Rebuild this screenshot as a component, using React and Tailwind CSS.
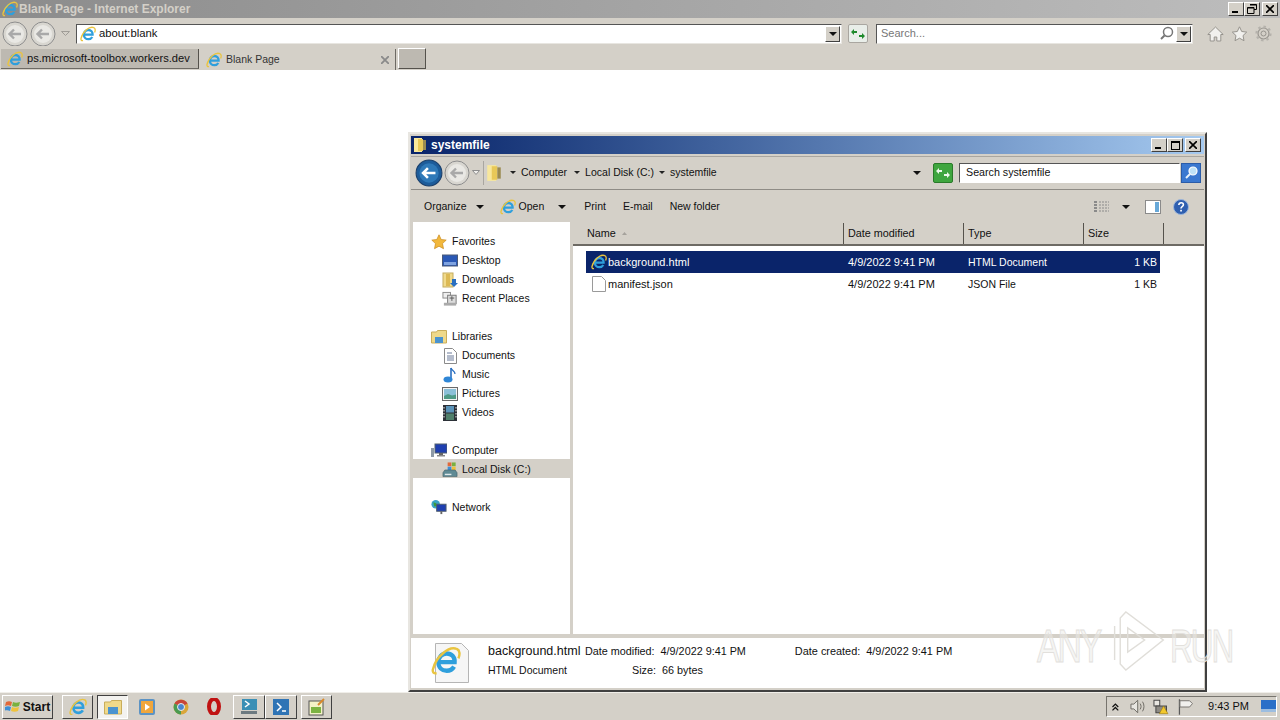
import React from 'react';

// small drawn icons
const IeIcon = ({ size = 16 }) => (
  <svg width={size} height={size} viewBox="0 0 16 16" className="shrink-0">
    <path d="M4 8.600h8.600c.2-2.800-1.700-4.600-4.200-4.600-2.600 0-4.500 2.100-4.500 4.700 0 2.700 1.900 4.500 4.500 4.500 1.800 0 3.100-.8 3.900-2.200" fill="none" stroke="#2f9fdc" strokeWidth="2.300" />
    <path d="M13.800 1.600C9.500-.2 2.600 5.800 1 12.500c-.3 1.500.5 2.300 2 2M13.800 1.600c1.700.7 1.700 3 .8 5" fill="none" stroke="#e9c440" strokeWidth="1.300" />
  </svg>
);

const FolderTall = ({ w = 14, h = 16 }) => (
  <svg width={w} height={h} viewBox="0 0 14 16" className="shrink-0">
    <rect x="1" y="1" width="8" height="14" fill="#f8e79c" />
    <rect x="5" y="2" width="5" height="12" fill="#e8c858" />
    <rect x="10" y="3" width="3" height="10" fill="#9a8a50" />
  </svg>
);

const NavButton = ({ active, size = 26 }) => (
  <svg width={size} height={size} viewBox="0 0 26 26" className="shrink-0">
    <circle cx="13" cy="13" r="12" fill={active ? '#1d5c9a' : '#d8d6d0'} stroke={active ? '#1b3f6a' : '#8d8d8d'} />
    <circle cx="13" cy="13" r="9" fill={active ? '#2f79b8' : '#e9e8e4'} />
    <path d={'M19 13H8m4-4.500-4.500 4.500 4.500 4.500'} fill="none" stroke={active ? '#fff' : '#a9a9a9'} strokeWidth="2.400" />
  </svg>
);

const Caret = ({ className = '' }) => (
  <span className={`inline-block w-0 h-0 border-x-[4px] border-x-transparent border-t-[4px] border-t-[#111] ${className}`} />
);

const SmallCaret = () => (
  <span className="inline-block w-0 h-0 border-x-[3px] border-x-transparent border-t-[3px] border-t-[#222]" />
);

const RefreshArrows = ({ color = '#1f8a2c' }) => (
  <svg width="14" height="10" viewBox="0 0 14 10">
    <path d="M6 2H3V0L0 3l3 3V4h3zM8 8h3v2l3-3-3-3v2H8z" fill={color} />
  </svg>
);

const WinClose = () => (
  <svg width="8" height="8" viewBox="0 0 8 8"><path d="M0 0l8 8M8 0l-8 8" stroke="#000" strokeWidth="1.600" /></svg>
);

const WinButton = ({ kind, className = '' }) => (
  <div className={`w-[16px] h-[14px] bg-[#d4d0c8] border border-t-white border-l-white border-r-[#404040] border-b-[#404040] flex items-center justify-center ${className}`}>
    {kind === 'min' && <div className="w-[6px] h-[2px] bg-black mt-[6px] mr-[2px]" />}
    {kind === 'max' && <div className="w-[9px] h-[9px] border border-black border-t-2" />}
    {kind === 'restore' && (
      <svg width="10" height="10" viewBox="0 0 10 10"><path d="M3 .5h6.500v5H7M.5 3.500h6.500v6H.5z" fill="none" stroke="#000" /><path d="M3 1h6.500M.5 4h6.500" stroke="#000" /></svg>
    )}
    {kind === 'close' && <WinClose />}
  </div>
);

const Star = ({ size = 16 }) => (
  <svg width={size} height={size} viewBox="0 0 16 16" className="shrink-0">
    <path d="M8 .8l2.200 4.700 5 .6-3.700 3.500 1 5.100L8 12.200l-4.500 2.500 1-5.100L.8 6.100l5-.6z" fill="#f2b83c" stroke="#c98a1e" strokeWidth=".7" />
  </svg>
);

const NavIcon = ({ kind }) => {
  if (kind === 'desktop') return (
    <svg width="16" height="14" viewBox="0 0 16 14"><rect x=".5" y="1" width="15" height="11" fill="#2a58b5" stroke="#4a5a78" /><rect x="2" y="8" width="12" height="3" fill="#7fa3e0" /></svg>
  );
  if (kind === 'downloads') return (
    <svg width="16" height="16" viewBox="0 0 16 16"><rect x="1" y="1" width="10" height="14" fill="#f0da8c" stroke="#c5ac5e" /><rect x="4" y="2" width="4" height="12" fill="#dcb955" /><path d="M10 7h4v4h2l-4 4-4-4h2z" fill="#2a6fc0" /></svg>
  );
  if (kind === 'recent') return (
    <svg width="17" height="16" viewBox="0 0 17 16"><rect x="1" y="1" width="8" height="6" fill="#eee" stroke="#888" /><rect x="6" y="4" width="9" height="9" fill="#dcdcdc" stroke="#777" /><path d="M8 7h5M10.500 5v5" stroke="#555" /><rect x="2" y="12" width="13" height="3" fill="#aaa" /></svg>
  );
  if (kind === 'libraries') return (
    <svg width="16" height="15" viewBox="0 0 16 15"><path d="M.5 3h5l1-1.500h9V14H.5z" fill="#efd98a" stroke="#c9ad5a" /><rect x="4" y="8" width="8" height="6" fill="#4a93cf" /></svg>
  );
  if (kind === 'documents') return (
    <svg width="13" height="16" viewBox="0 0 13 16"><path d="M.5.500h8l4 4v11H.5z" fill="#fff" stroke="#8a8a8a" /><path d="M3 5h5M3 8h7M3 10h7M3 12h7" stroke="#6a7a9a" /></svg>
  );
  if (kind === 'music') return (
    <svg width="14" height="16" viewBox="0 0 14 16"><path d="M8 1v11" stroke="#2a6fc0" strokeWidth="1.600" /><path d="M8 1c1 3 4 3 4 6" fill="none" stroke="#2a6fc0" strokeWidth="1.300" /><ellipse cx="5" cy="12.500" rx="4.500" ry="3" fill="#2f86d6" /></svg>
  );
  if (kind === 'pictures') return (
    <svg width="16" height="14" viewBox="0 0 16 14"><rect x=".5" y=".5" width="15" height="13" fill="#f4f4f4" stroke="#6a6a6a" /><rect x="2" y="2" width="12" height="10" fill="#8cc0d8" /><path d="M2 9l4-2 4 1.500 4-1V12H2z" fill="#4f9a86" /></svg>
  );
  if (kind === 'videos') return (
    <svg width="14" height="16" viewBox="0 0 14 16"><rect width="14" height="16" fill="#2c3138" /><rect x="3" y="1" width="8" height="6.500" fill="#5a93b8" /><rect x="3" y="8.500" width="8" height="6.500" fill="#4f7f6a" /><path d="M1 2v12M13 2v12" stroke="#ccc" strokeWidth="1.200" strokeDasharray="1.500 1.500" /></svg>
  );
  if (kind === 'computer') return (
    <svg width="16" height="16" viewBox="0 0 16 16"><rect x="4" y="1" width="12" height="9" fill="#1f3fb0" stroke="#52606e" /><rect x="8" y="10" width="4" height="2" fill="#666" /><rect x="6" y="12" width="8" height="1.500" fill="#888" /><rect y="5" width="3" height="9" fill="#8e9aa6" /></svg>
  );
  if (kind === 'disk') return (
    <svg width="17" height="17" viewBox="0 0 17 17"><rect x="6" y="1" width="4" height="4" fill="#e2693a" /><rect x="10.500" y="1" width="4" height="4" fill="#79b13f" /><rect x="6" y="5.500" width="4" height="4" fill="#3f8fd6" /><rect x="10.500" y="5.500" width="4" height="4" fill="#efc23c" /><path d="M3 9h11l2 3v4H1v-4z" fill="#5f8a94" stroke="#3f5a62" strokeWidth=".6" /><rect x="3" y="13" width="7" height="1.500" fill="#dfe8ea" /></svg>
  );
  if (kind === 'network') return (
    <svg width="17" height="17" viewBox="0 0 17 17"><circle cx="5" cy="5" r="4.500" fill="#38a3c8" /><path d="M2.500 3l3 1 1 3-3 .5z" fill="#3c9a3c" /><rect x="6" y="5" width="10" height="7.500" fill="#1f3fb0" stroke="#4f5d6c" /><rect x="10" y="12.500" width="2" height="3" fill="#666" /></svg>
  );
  return null;
};

const NavHead = ({ icon, label }) => (
  <div className="h-[19px] pt-[2px] flex items-center pl-[18px] gap-[5px]">
    <div className="w-[16px] flex justify-center">{icon}</div>
    <span>{label}</span>
  </div>
);

const NavItem = ({ kind, label, selected }) => (
  <div className={`h-[19px] pt-[2px] flex items-center pl-[29px] gap-[4px] ${selected ? 'bg-[#d4d0c8]' : ''}`}>
    <div className="w-[16px] flex justify-center"><NavIcon kind={kind} /></div>
    <span>{label}</span>
  </div>
);

const FileRow = ({ icon, name, type, selected }) => (
  <div className={`h-[22px] flex items-center ${selected ? 'bg-[#0a246a] text-white' : ''}`}>
    <div className="w-[22px] flex justify-center pl-[3px]">{icon}</div>
    <span className="w-[240px]">{name}</span>
    <span className="w-[120px]">4/9/2022 9:41 PM</span>
    <span className="w-[120px] pt-px text-[10.500px]">{type}</span>
    <span className="w-[69px] pt-px text-right text-[10.500px]">1 KB</span>
  </div>
);

const Explorer = () => (
  <div className="absolute left-[408px] top-[132px] w-[799px] h-[560px] bg-[#d4d0c8] border-2 border-t-[#e8e6e1] border-l-[#e8e6e1] border-r-[#404040] border-b-[#404040] pt-[2px] px-[1px] flex flex-col text-[11px] text-[#111]">
    {/* title */}
    <div className="h-[18px] shrink-0 bg-gradient-to-r from-[#0a246a] to-[#a6caf0] flex items-center px-[2px]">
      <FolderTall />
      <span className="ml-[4px] text-white font-bold text-[12px]">systemfile</span>
      <div className="ml-auto flex mr-[1px]">
        <WinButton kind="min" />
        <WinButton kind="max" />
        <WinButton kind="close" className="ml-[2px]" />
      </div>
    </div>
    {/* address row */}
    <div className="h-[34px] shrink-0 mt-[2px] pb-[1px] border-y border-y-[#8f8c86] border-t-[#a9a6a0] flex items-center pl-[4px] pr-[3px]">
      <NavButton active size={28} />
      <div className="ml-[1px]"><NavButton /></div>
      <div className="ml-[2px] mr-[3px]"><svg width="8" height="5" viewBox="0 0 8 5"><path d="M.5.500h7L4 4.500z" fill="#f0efec" stroke="#8d8d8d" /></svg></div>
      <div className="w-px h-[24px] bg-[#a9a6a0]" />
      <div className="ml-[2px]"><FolderTall w={16} h={18} /></div>
      <div className="ml-[8px] flex items-center gap-[5px] text-[10.500px]">
        <SmallCaret /><span>Computer</span>
      </div>
      <div className="ml-[7px] flex items-center gap-[5px] text-[10.500px]">
        <SmallCaret /><span>Local Disk (C:)</span>
      </div>
      <div className="ml-[5px] flex items-center gap-[5px] text-[10.500px]">
        <SmallCaret /><span>systemfile</span>
      </div>
      <Caret className="ml-auto" />
      <div className="ml-[12px] w-[20px] h-[20px] bg-[#3fa63f] border border-[#2a7a2a] rounded-[2px] flex items-center justify-center">
        <RefreshArrows color="#ecf8ea" />
      </div>
      <div className="ml-[6px] w-[221px] h-[20px] bg-white border border-t-[#555] border-l-[#555] border-r-white border-b-white flex items-center pl-[6px] text-[10.700px]">Search systemfile</div>
      <div className="ml-px w-[20px] h-[20px] bg-[#3a78d0] border border-[#2b5ca8] flex items-center justify-center">
        <svg width="15" height="15" viewBox="0 0 15 15"><circle cx="9" cy="6" r="4" fill="#bfe2f7" stroke="#fff" strokeWidth="1.200" /><path d="M6 9l-4 4" stroke="#e8f2fb" strokeWidth="2" /></svg>
      </div>
    </div>
    {/* command bar */}
    <div className="h-[32px] shrink-0 pt-px flex items-center pl-[13px] text-[10.500px]">
      <span>Organize</span>
      <Caret className="ml-[9px]" />
      <div className="ml-[16px]"><IeIcon /></div>
      <span className="ml-[3px]">Open</span>
      <Caret className="ml-[14px]" />
      <span className="ml-[18px]">Print</span>
      <span className="ml-[17px]">E-mail</span>
      <span className="ml-[17px]">New folder</span>
      <div className="ml-auto flex items-center mr-[15px]">
        <svg width="16" height="13" viewBox="0 0 16 13"><path d="M0 2h3M0 5h3M0 8h3M0 11h3" stroke="#8a8a8a" strokeWidth="2" /><path d="M5 2h10M5 5h10M5 8h10M5 11h10" stroke="#8a8a8a" strokeDasharray="2 1" /></svg>
        <Caret className="ml-[12px]" />
        <svg width="16" height="14" viewBox="0 0 16 14" className="ml-[15px]"><rect x=".5" y=".5" width="15" height="13" fill="#fff" stroke="#8a8a8a" /><rect x="10" y="2" width="4" height="10" fill="#67a8d8" /></svg>
        <svg width="16" height="16" viewBox="0 0 16 16" className="ml-[12px]"><circle cx="8" cy="8" r="7.500" fill="#2f5fb0" stroke="#9db6da" /><path d="M5.800 6c.2-3 4.600-3 4.600-.2 0 2-2.400 1.800-2.400 3.700" fill="none" stroke="#fff" strokeWidth="1.600" /><rect x="7.200" y="10.800" width="1.700" height="1.700" fill="#fff" /></svg>
      </div>
    </div>
    {/* body */}
    <div className="flex flex-1 min-h-0">
      <div className="w-[2px] shrink-0" />
      <div className="w-[157px] shrink-0 bg-white pt-[9px] text-[10.500px]">
        <NavHead icon={<Star />} label="Favorites" />
        <NavItem kind="desktop" label="Desktop" />
        <NavItem kind="downloads" label="Downloads" />
        <NavItem kind="recent" label="Recent Places" />
        <div className="mt-[19px]">
          <NavHead icon={<NavIcon kind="libraries" />} label="Libraries" />
          <NavItem kind="documents" label="Documents" />
          <NavItem kind="music" label="Music" />
          <NavItem kind="pictures" label="Pictures" />
          <NavItem kind="videos" label="Videos" />
        </div>
        <div className="mt-[19px]">
          <NavHead icon={<NavIcon kind="computer" />} label="Computer" />
          <NavItem kind="disk" label="Local Disk (C:)" selected />
        </div>
        <div className="mt-[19px]">
          <NavHead icon={<NavIcon kind="network" />} label="Network" />
        </div>
      </div>
      <div className="w-[3px] shrink-0" />
      <div className="flex-1 bg-white flex flex-col min-w-0">
        <div className="h-[24px] shrink-0 bg-[#d4d0c8] border-b-2 border-b-[#6d6a64] pt-px flex text-[10.800px]">
          <div className="w-[271px] border-r border-r-[#55524c] flex items-center pl-[14px] gap-[6px]">
            <span>Name</span>
            <svg width="5" height="3" viewBox="0 0 5 3"><path d="M2.500 0L5 3H0z" fill="#a5a29c" /></svg>
          </div>
          <div className="w-[120px] border-r border-r-[#55524c] flex items-center pl-[4px]">Date modified</div>
          <div className="w-[120px] border-r border-r-[#55524c] flex items-center pl-[4px]">Type</div>
          <div className="w-[80px] border-r border-r-[#55524c] flex items-center pl-[4px]">Size</div>
        </div>
        <div className="ml-[13px] w-[574px] mt-[5px]">
          <FileRow icon={<IeIcon />} name="background.html" type="HTML Document" selected />
          <FileRow
            icon={<svg width="14" height="16" viewBox="0 0 14 16"><path d="M.5.500h9l4 4v11H.5z" fill="#fff" stroke="#9a9a9a" /></svg>}
            name="manifest.json"
            type="JSON File"
          />
        </div>
      </div>
    </div>
    {/* details pane */}
    <div className="h-[50px] shrink-0 mt-[4px] mb-[2px] bg-white flex items-center relative">
      <div className="ml-[20px] relative w-[40px] h-[40px]">
        <svg width="34" height="40" viewBox="0 0 34 40" className="absolute left-[4px] top-0"><path d="M.5.500h26l7 7v32H.5z" fill="#f6f6f6" stroke="#b5b5b5" /></svg>
        <div className="absolute left-0 top-[3px]"><IeIcon size={30} /></div>
      </div>
      <div className="ml-[17px] w-[97px] h-[35px] mb-[5px] flex flex-col justify-between">
        <span className="text-[12.500px] leading-[16px]">background.html</span>
        <span className="leading-[16px] text-[10.500px]">HTML Document</span>
      </div>
      <div className="h-[35px] mb-[5px] flex flex-col justify-between text-[10.800px]">
        <span className="leading-[16px]">Date modified:&nbsp; 4/9/2022 9:41 PM</span>
        <span className="leading-[16px] ml-[47px]">Size:&nbsp; 66 bytes</span>
      </div>
      <div className="h-[35px] mb-[5px] ml-[49px] text-[10.900px]">
        <span className="leading-[16px]">Date created:&nbsp; 4/9/2022 9:41 PM</span>
      </div>
    </div>
  </div>
);

const TaskButton = ({ children, pressed, className = '' }) => (
  <div className={`h-[24px] flex items-center justify-center border ${pressed ? 'bg-[#f3f2ef] border-t-[#404040] border-l-[#404040] border-r-white border-b-white' : 'border-t-white border-l-white border-r-[#404040] border-b-[#404040]'} ${className}`}>
    {children}
  </div>
);

export default function App() {
  return (
    <div className="w-[1280px] h-[720px] relative overflow-hidden bg-white flex flex-col font-['Liberation_Sans',sans-serif] text-[11px] text-[#222]">
      {/* IE title bar */}
      <div className="h-[18px] shrink-0 bg-gradient-to-r from-[#8c8c8c] to-[#bdbdbd] flex items-center pl-[2px] pr-[2px]">
        <IeIcon />
        <span className="ml-[1px] text-[#d4d0c8] font-bold text-[12px]">Blank Page - Internet Explorer</span>
        <div className="ml-auto flex">
          <WinButton kind="min" />
          <WinButton kind="restore" />
          <WinButton kind="close" className="ml-[2px]" />
        </div>
      </div>
      {/* IE toolbar */}
      <div className="h-[28px] shrink-0 bg-[#d4d0c8] pt-[3px] flex items-center pl-[2px]">
        <NavButton />
        <div className="ml-[2px]"><NavButton /></div>
        <div className="ml-[5px]"><svg width="9" height="5" viewBox="0 0 9 5"><path d="M.5.500h8L4.500 4.500z" fill="#d4d0c8" stroke="#a09d97" /></svg></div>
        <div className="ml-[6px] w-[766px] h-[20px] bg-white border border-t-[#555] border-l-[#555] border-r-[#e8e6e1] border-b-[#e8e6e1] flex items-center pl-[3px]">
          <IeIcon />
          <span className="ml-[3px] text-[11.300px] text-[#111]">about:blank</span>
          <div className="ml-auto mr-[1px] w-[15px] h-[16px] bg-[#d4d0c8] border border-t-white border-l-white border-r-[#404040] border-b-[#404040] flex items-center justify-center"><Caret /></div>
        </div>
        <div className="ml-[6px] w-[20px] h-[19px] bg-[#e9eee9] border border-[#a9a6a0] rounded-[2px] flex items-center justify-center"><RefreshArrows /></div>
        <div className="ml-[8px] w-[317px] h-[20px] bg-white border border-t-[#555] border-l-[#555] border-r-[#e8e6e1] border-b-[#e8e6e1] flex items-center pl-[4px]">
          <span className="text-[#777]">Search...</span>
          <svg width="15" height="15" viewBox="0 0 15 15" className="ml-auto"><circle cx="9" cy="6" r="4.500" fill="none" stroke="#777" strokeWidth="1.500" /><path d="M5.500 9.500L2 13" stroke="#777" strokeWidth="2" /></svg>
          <div className="ml-[2px] mr-[1px] w-[15px] h-[16px] bg-[#d4d0c8] border border-t-white border-l-white border-r-[#404040] border-b-[#404040] flex items-center justify-center"><Caret /></div>
        </div>
        <div className="ml-[14px] flex items-center gap-[7px]">
          <svg width="17" height="16" viewBox="0 0 17 16"><path d="M8.500 1L.8 8.500h2.400V15h4v-4h2.600v4h4V8.500h2.400z" fill="#f1f0ed" stroke="#96938d" strokeLinejoin="round" /></svg>
          <svg width="17" height="16" viewBox="0 0 16 16"><path d="M8 .8l2.200 4.700 5 .6-3.700 3.500 1 5.100L8 12.200l-4.500 2.500 1-5.100L.8 6.100l5-.6z" fill="#f1f0ed" stroke="#96938d" /></svg>
          <svg width="17" height="17" viewBox="0 0 17 17"><circle cx="8.500" cy="8.500" r="5.500" fill="none" stroke="#96938d" strokeWidth="1.200" /><circle cx="8.500" cy="8.500" r="6.800" fill="none" stroke="#b5b2ac" strokeWidth="2.600" strokeDasharray="2.400 2.900" /><circle cx="8.500" cy="8.500" r="2.500" fill="none" stroke="#96938d" /></svg>
        </div>
      </div>
      {/* IE tabs */}
      <div className="h-[24px] shrink-0 bg-[#d4d0c8] flex items-end pl-[1px]">
        <div className="w-[198px] h-[20px] bg-[#bdb9b1] border-r border-b border-r-[#55524c] border-b-[#6d6a64] flex items-center pl-[6px] gap-[4px] mb-px">
          <IeIcon />
          <span className="text-[#111] text-[11.150px]">ps.microsoft-toolbox.workers.dev</span>
        </div>
        <div className="w-[196px] h-[21px] ml-px border-r border-r-[#6d6a64] flex items-center pl-[6px] gap-[4px]">
          <IeIcon />
          <span className="text-[10.500px] text-[#333]">Blank Page</span>
          <svg width="8" height="8" viewBox="0 0 8 8" className="ml-auto mr-[6px]"><path d="M0 0l8 8M8 0l-8 8" stroke="#8a8a8a" strokeWidth="1.800" /></svg>
        </div>
        <div className="ml-[2px] w-[28px] h-[21px] bg-[#bdb9b1] border border-t-white border-l-white border-r-[#55524c] border-b-[#55524c] mb-px" />
      </div>
      {/* page area */}
      <div className="flex-1 bg-white" />
      {/* taskbar */}
      <div className="h-[28px] shrink-0 bg-[#d4d0c8] border-t border-t-[#f0eee9] flex items-center pl-[2px]">
        <TaskButton className="w-[51px] gap-[2px]">
          <svg width="16" height="15" viewBox="0 0 16 15"><path d="M1 3c2-1 4-1 6 0L6 7c-2-1-4-1-6 0z" fill="#e2693a" /><path d="M8 3c2 1 4 1 7 0l-1 4c-2 1-5 1-7 0z" fill="#79b13f" /><path d="M0 8c2-1 4-1 6 0l-1 4c-2-1-4-1-6 0z" fill="#3f8fd6" /><path d="M7 8c2 1 4 1 7 0l-1 4c-2 1-5 1-7 0z" fill="#efc23c" /></svg>
          <span className="font-bold text-[12px] text-[#111]">Start</span>
        </TaskButton>
        <TaskButton className="ml-[9px] w-[31px]"><IeIcon size={18} /></TaskButton>
        <TaskButton pressed className="ml-[4px] w-[31px]">
          <svg width="18" height="16" viewBox="0 0 18 16"><path d="M.5 3h6l1-1.500h10V15H.5z" fill="#efd98a" stroke="#c9ad5a" /><rect x="4" y="8" width="10" height="7" fill="#4a93cf" /></svg>
        </TaskButton>
        <div className="ml-[11px] w-[16px] flex justify-center">
          <svg width="16" height="16" viewBox="0 0 16 16"><rect width="16" height="16" rx="2" fill="#5c93c4" /><rect x="2" y="2" width="12" height="12" fill="#f0a63c" /><path d="M6 4.500l5 3.500-5 3.500z" fill="#fff" /></svg>
        </div>
        <div className="ml-[18px] w-[16px] flex justify-center">
          <svg width="16" height="16" viewBox="0 0 16 16"><circle cx="8" cy="8" r="7.500" fill="#d9a63a" /><path d="M8 8L1.500 4.500A7.500 7.500 0 0 1 14.500 4.500z" fill="#c8453a" /><path d="M8 8L8 15.500A7.500 7.500 0 0 1 1.500 4.500z" fill="#4a9a50" /><circle cx="8" cy="8" r="3.500" fill="#4a86d0" stroke="#eee" /></svg>
        </div>
        <div className="ml-[17px] w-[16px] flex justify-center">
          <svg width="16" height="17" viewBox="0 0 16 17"><ellipse cx="8" cy="8.500" rx="5" ry="7.500" fill="none" stroke="#c01212" strokeWidth="4" /></svg>
        </div>
        <TaskButton className="ml-[11px] w-[32px]">
          <svg width="18" height="18" viewBox="0 0 18 18"><rect x="2" y="1" width="15" height="11" fill="#3a8fb5" /><path d="M5 3l4 3-4 3" fill="none" stroke="#fff" strokeWidth="1.500" /><rect x="1" y="13" width="16" height="3" fill="#6d7a80" /></svg>
        </TaskButton>
        <TaskButton className="w-[32px]">
          <svg width="18" height="18" viewBox="0 0 18 18"><rect x="1" y="1" width="16" height="16" fill="#2f74b5" /><path d="M5 5l4 4-4 4M10 13h4" fill="none" stroke="#fff" strokeWidth="1.500" /></svg>
        </TaskButton>
        <TaskButton className="ml-[4px] w-[31px]">
          <svg width="18" height="18" viewBox="0 0 18 18"><rect x="1" y="3" width="14" height="14" fill="#f4f2c8" stroke="#555" /><rect x="3" y="9" width="10" height="6" fill="#7cb342" /><path d="M16 1l-6 6" stroke="#d98a2b" strokeWidth="2" /></svg>
        </TaskButton>
        {/* tray */}
        <div className="ml-auto mr-[3px] w-[171px] h-[21px] border border-t-[#77746e] border-l-[#77746e] border-r-white border-b-white flex items-center pl-[5px]">
          <svg width="7" height="8" viewBox="0 0 7 8"><path d="M.5 4l3-3 3 3M.5 7.500l3-3 3 3" fill="none" stroke="#111" strokeWidth="1.300" /></svg>
          <svg width="16" height="15" viewBox="0 0 16 15" className="ml-[11px]"><path d="M1 5h3l4-4v13l-4-4H1z" fill="#e8e6e1" stroke="#6d6a64" /><path d="M10.500 4.500c1.300 2 1.300 4 0 6M13 2.500c2 3 2 7 0 10" fill="none" stroke="#6d6a64" /></svg>
          <svg width="16" height="17" viewBox="0 0 16 17" className="ml-[8px]"><rect x="1" y="2" width="6" height="6" fill="#e8e6e1" stroke="#444" /><rect x="3" y="8" width="11" height="7" fill="#8d8a84" stroke="#444" /><path d="M11 8l4.500 8h-9z" fill="#f3c82c" stroke="#9a7a10" strokeWidth=".6" /></svg>
          <svg width="16" height="16" viewBox="0 0 16 16" className="ml-[9px]"><path d="M1.500 0v16" stroke="#5a5a5a" strokeWidth="1.300" /><path d="M2 1.500h10l3 3-3 3.500H2z" fill="#f1f0ed" stroke="#77746e" /></svg>
          <span className="ml-[15px] text-[#111] whitespace-nowrap">9:43 PM</span>
          <svg width="15" height="13" viewBox="0 0 15 13" className="ml-[12px] shrink-0"><rect width="15" height="11" fill="#2a6fc8" /><rect y="9" width="15" height="3" fill="#9cbde0" /></svg>
        </div>
      </div>
      <Explorer />
      {/* watermark over the window edge */}
      <div className="absolute left-[1037px] top-[610px] w-[196px] h-[62px] flex items-center pointer-events-none">
        <span className="w-[64px] shrink-0 origin-left scale-x-[0.72] text-[47px] leading-none text-[#ecebe7]/50 [-webkit-text-stroke:1px_#e2e0dc] tracking-[-3px] pt-[8px]">ANY</span>
        <svg width="58" height="62" viewBox="0 0 62 62" preserveAspectRatio="none" className="ml-[8px] shrink-0"><path d="M6 16v34M12 8v46l6 6 40-30L18 2zM20 18v24l18-12z" fill="none" stroke="#e0ded9" strokeWidth="1.500" /></svg>
        <span className="ml-[3px] w-[62px] shrink-0 origin-left scale-x-[0.67] text-[47px] leading-none text-[#ecebe7]/50 [-webkit-text-stroke:1px_#e2e0dc] tracking-[-3px] pt-[8px]">RUN</span>
      </div>
    </div>
  );
}
